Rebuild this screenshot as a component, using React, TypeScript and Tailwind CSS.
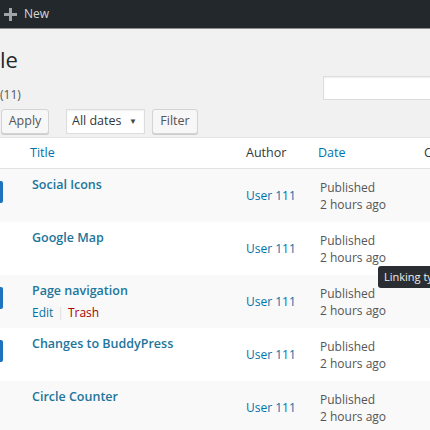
import React from "react";

const rows = [
  { title: "Social Icons", bar: true, actions: false, shade: true },
  { title: "Google Map", bar: false, actions: false, shade: false },
  { title: "Page navigation", bar: true, actions: true, shade: true },
  { title: "Changes to BuddyPress", bar: true, actions: false, shade: false },
  { title: "Circle Counter", bar: false, actions: false, shade: true },
];

export default function App() {
  return (
    <div
      className="relative w-[430px] h-[430px] overflow-hidden bg-[#f1f1f1] text-[#444]"
      style={{ fontFamily: '"Open Sans", "Noto Sans", sans-serif' }}
    >
      {/* admin bar */}
      <div className="h-[29px] bg-[#23282d] border-b border-[#8a8d90] flex items-center pl-[4px] gap-[7px]">
        <svg width="13" height="13" viewBox="0 0 13 13" className="text-[#a0a5aa]">
          <rect x="5" y="0" width="3" height="13" fill="currentColor" />
          <rect x="0" y="5" width="13" height="3" fill="currentColor" />
        </svg>
        <span className="text-[12px] text-[#d6d6d6] leading-none">New</span>
      </div>

      {/* heading */}
      <div className="h-[19px]" />
      <h1 className="text-[22px] leading-[23px] text-[#23282d] font-normal">le</h1>

      {/* status / search */}
      <div className="flex items-start mt-[5px] h-[32px]">
        <div className="shrink-0 pt-[10px] text-[12px] leading-[17px] text-[#555] w-[323px]">(11)</div>
        <div className="shrink-0 w-[120px] h-[24px] bg-white border border-[#ddd] shadow-[inset_0_1px_2px_rgba(0,0,0,0.07)]" />
      </div>

      {/* bulk actions */}
      <div className="flex items-center h-[26px]">
        <div className="shrink-0 ml-[1px] w-[48px] h-[25px] flex items-center justify-center bg-[#f7f7f7] border border-[#d4d4d4] rounded-[3px] text-[12.5px] text-[#555] shadow-[0_1px_0_#ccc]">
          Apply
        </div>
        <div className="shrink-0 ml-[17px] w-[79px] h-[25px] flex items-center justify-between pl-[5px] pr-[7px] bg-white border border-[#ddd] text-[12.5px] text-[#32373c] shadow-[inset_0_1px_2px_rgba(0,0,0,0.07)]">
          <span>All dates</span>
          <span className="text-[8px] text-[#444]">▼</span>
        </div>
        <div className="shrink-0 ml-[7px] w-[46px] h-[25px] flex items-center justify-center bg-[#f7f7f7] border border-[#d4d4d4] rounded-[3px] text-[12.5px] text-[#555] shadow-[0_1px_0_#ccc]">
          Filter
        </div>
      </div>

      {/* table */}
      <div className="mt-[3px] bg-white border-t border-[#e5e5e5]">
        <div className="flex items-center h-[31px] border-b border-[#e1e1e1] text-[12.5px]">
          <div className="shrink-0 w-[30px]" />
          <div className="shrink-0 w-[216px] text-[#0073aa]">Title</div>
          <div className="shrink-0 w-[72px] text-[#32373c]">Author</div>
          <div className="shrink-0 w-[106px] text-[#0073aa]">Date</div>
          <div className="shrink-0 whitespace-nowrap text-[#32373c]">Comments</div>
        </div>
        {rows.map((r) => (
          <div
            key={r.title}
            className={`flex h-[53px] ${r.shade ? "bg-[#f9f9f9]" : "bg-white"}`}
          >
            <div className="shrink-0 w-[32px] pt-[12px]">
              {r.bar && <div className="w-[3px] h-[22px] bg-[#1e73be] rounded-r-[2px]" />}
            </div>
            <div className="shrink-0 w-[214px] pt-[6px]">
              <div className="text-[12.5px] leading-[20px] font-semibold text-[#21759b] whitespace-nowrap">
                {r.title}
              </div>
              {r.actions && (
                <div className="mt-[2px] text-[12px] leading-[20px] whitespace-nowrap">
                  <span className="text-[#0073aa]">Edit</span>
                  <span className="text-[#ddd] mx-[4px]">|</span>
                  <span className="text-[#a00]">Trash</span>
                </div>
              )}
            </div>
            <div className="shrink-0 w-[72px] flex items-center text-[12px] text-[#0073aa] whitespace-nowrap">
              User 111
            </div>
            <div className="shrink-0 w-[106px] flex flex-col justify-center pl-[2px] text-[12px] leading-[17px] text-[#555] whitespace-nowrap">
              <span>Published</span>
              <span>2 hours ago</span>
            </div>
          </div>
        ))}
      </div>

      {/* tooltip */}
      <div className="absolute left-[378px] top-[266px] h-[22px] px-[6px] flex items-center bg-[#2a2e33] rounded-[3px] text-[11px] text-[#eee] whitespace-nowrap">
        Linking types
      </div>
    </div>
  );
}
